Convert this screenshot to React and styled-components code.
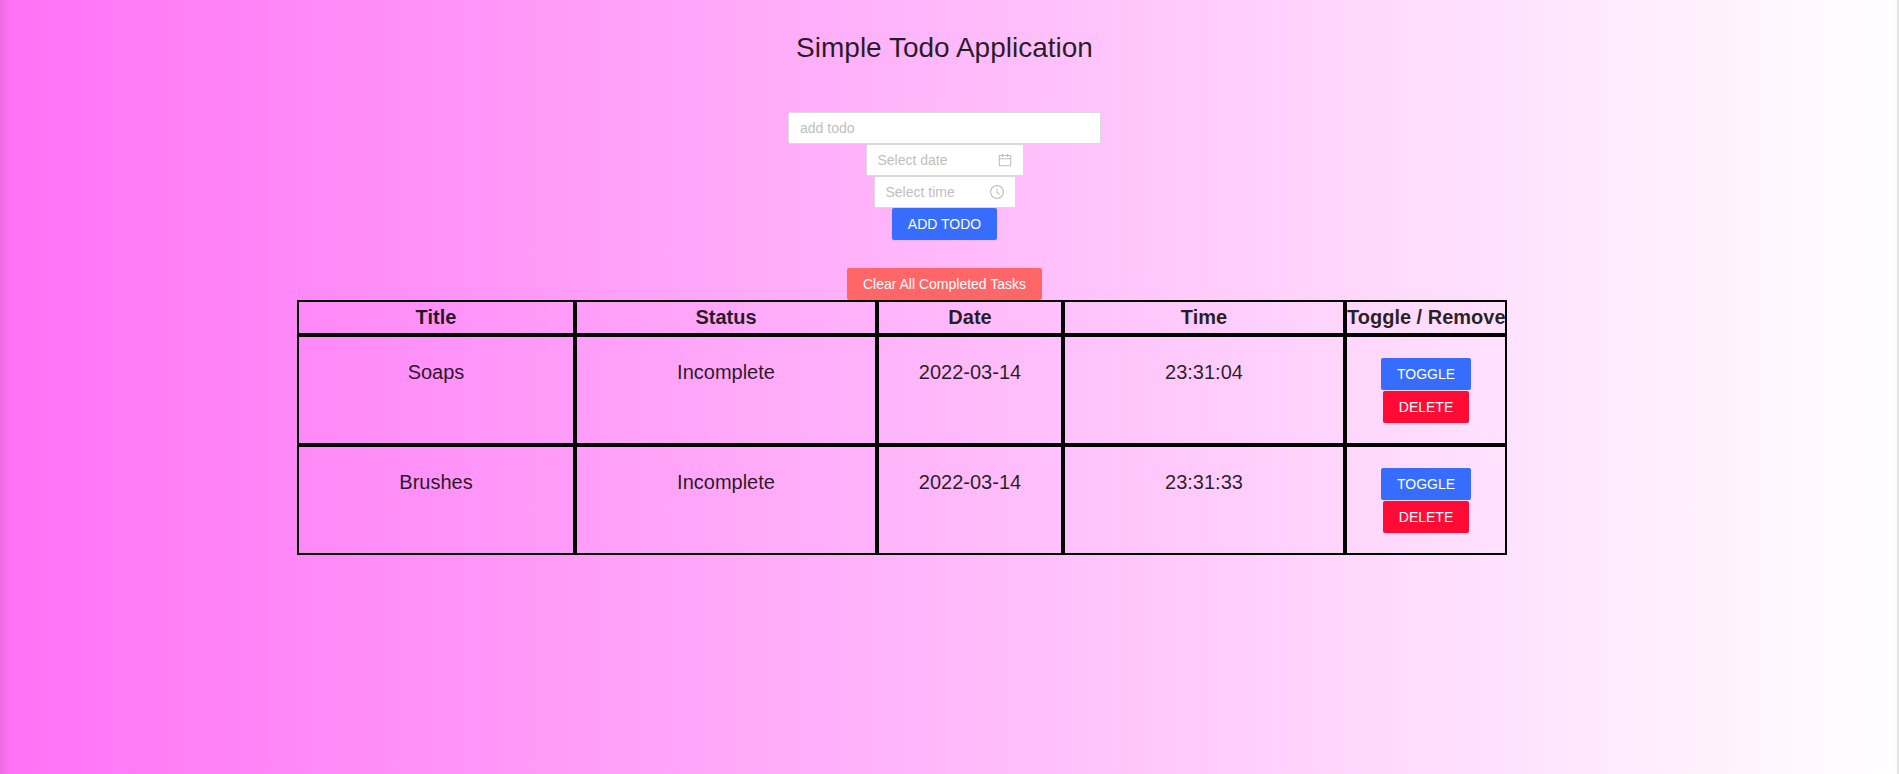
import React from "react";
import styled, { createGlobalStyle } from "styled-components";

const GlobalStyle = createGlobalStyle`
  *, *::before, *::after { box-sizing: border-box; }
  body {
    margin: 0;
    font-family: "Liberation Sans", Arial, sans-serif;
    font-size: 14px;
    line-height: 22px;
    color: rgba(0, 0, 0, 0.85);
  }
`;

const Page = styled.main`
  min-height: 100vh;
  padding: 30px 10px 0 0;
  background:
    linear-gradient(to right, rgba(0, 0, 0, 0.07), transparent 12px),
    linear-gradient(to left, rgba(0, 0, 0, 0.1) 2px, rgba(0, 0, 0, 0.02) 2px, transparent 5px),
    linear-gradient(to right, #ff72f6, #ffffff);
`;

const Heading = styled.h1`
  margin: 0 0 46px;
  font-size: 28px;
  line-height: 36px;
  font-weight: 400;
  text-align: center;
`;

const Form = styled.form`
  display: flex;
  flex-direction: column;
  align-items: center;
  margin-bottom: 28px;
`;

const Field = styled.label`
  display: flex;
  align-items: center;
  width: ${(p) => p.$width}px;
  height: 32px;
  padding: 0 11px;
  background: #fff;
  border: 1px solid #d9d9d9;
  border-radius: 2px;
  color: rgba(0, 0, 0, 0.25);
`;

const TextInput = styled.input`
  flex: 1;
  min-width: 0;
  padding: 0;
  border: 0;
  outline: 0;
  background: transparent;
  font: inherit;
  color: rgba(0, 0, 0, 0.85);
  &::placeholder { color: #bfbfbf; opacity: 1; }
`;

const Icon = styled.svg`
  flex: none;
  width: 14px;
  height: 14px;
  fill: currentColor;
`;

const Button = styled.button`
  height: 32px;
  padding: 0 16px;
  border: 0;
  border-radius: 2px;
  background: ${(p) => p.$color};
  box-shadow: 0 2px 0 rgba(0, 0, 0, 0.02);
  color: #fff;
  font: inherit;
  white-space: nowrap;
  cursor: pointer;
`;

const ClearBar = styled.div`
  display: flex;
  justify-content: center;
`;

const TableArea = styled.section`
  padding: 0 382px 0 297px;
`;

const Table = styled.table`
  width: 100%;
  table-layout: fixed;
  border-spacing: 0;
  font-size: 20px;
  line-height: 31px;
  text-align: center;
`;

const Column = styled.col`
  width: ${(p) => p.$width}px;
`;

const HeaderCell = styled.th`
  padding: 0;
  border: 2px solid #000;
  font-weight: 700;
  white-space: nowrap;
`;

const Cell = styled.td`
  height: 110px;
  padding: 21px 0 20px;
  border: 2px solid #000;
  line-height: 29px;
  vertical-align: top;
`;

const Actions = styled.div`
  display: flex;
  flex-direction: column;
  align-items: center;
  gap: 1px;
  font-size: 14px;
`;

const BLUE = "#366dff";
const RED = "#ff0b36";
const CORAL = "#ff6668";

const columns = [
  { label: "Title", width: 278 },
  { label: "Status", width: 302 },
  { label: "Date", width: 186 },
  { label: "Time", width: 282 },
  { label: "Toggle / Remove", width: 162 },
];

const todos = [
  { title: "Soaps", status: "Incomplete", date: "2022-03-14", time: "23:31:04" },
  { title: "Brushes", status: "Incomplete", date: "2022-03-14", time: "23:31:33" },
];

const CalendarIcon = () => (
  <Icon viewBox="64 64 896 896" aria-hidden="true">
    <path d="M880 184H712v-64c0-4.4-3.6-8-8-8h-56c-4.4 0-8 3.6-8 8v64H384v-64c0-4.4-3.6-8-8-8h-56c-4.4 0-8 3.6-8 8v64H144c-17.7 0-32 14.3-32 32v664c0 17.7 14.3 32 32 32h736c17.7 0 32-14.3 32-32V216c0-17.7-14.3-32-32-32zm-40 656H184V460h656v380zM184 392V256h128v48c0 4.4 3.6 8 8 8h56c4.4 0 8-3.6 8-8v-48h256v48c0 4.4 3.6 8 8 8h56c4.4 0 8-3.6 8-8v-48h128v136H184z" />
  </Icon>
);

const ClockIcon = () => (
  <Icon viewBox="64 64 896 896" aria-hidden="true">
    <path d="M512 64C264.6 64 64 264.6 64 512s200.6 448 448 448 448-200.6 448-448S759.4 64 512 64zm0 820c-205.4 0-372-166.6-372-372s166.6-372 372-372 372 166.6 372 372-166.6 372-372 372z" />
    <path d="M686.7 638.6L544.1 535.5V288c0-4.4-3.6-8-8-8H488c-4.4 0-8 3.6-8 8v275.4c0 2.6 1.2 5 3.3 6.5l165.4 120.6c3.6 2.6 8.6 1.9 11.2-1.7l28.6-39c2.6-3.7 1.8-8.7-1.8-11.2z" />
  </Icon>
);

export default function App() {
  return (
    <>
      <GlobalStyle />
      <Page>
        <Heading>Simple Todo Application</Heading>
        <Form onSubmit={(e) => e.preventDefault()}>
          <Field $width={313}>
            <TextInput type="text" placeholder="add todo" aria-label="Todo" />
          </Field>
          <Field $width={158}>
            <TextInput type="text" placeholder="Select date" aria-label="Date" />
            <CalendarIcon />
          </Field>
          <Field $width={142}>
            <TextInput type="text" placeholder="Select time" aria-label="Time" />
            <ClockIcon />
          </Field>
          <Button type="submit" $color={BLUE}>ADD TODO</Button>
        </Form>
        <ClearBar>
          <Button type="button" $color={CORAL}>Clear All Completed Tasks</Button>
        </ClearBar>
        <TableArea>
          <Table>
            <colgroup>
              {columns.map((c) => <Column key={c.label} $width={c.width} />)}
            </colgroup>
            <thead>
              <tr>
                {columns.map((c) => <HeaderCell key={c.label} scope="col">{c.label}</HeaderCell>)}
              </tr>
            </thead>
            <tbody>
              {todos.map((t) => (
                <tr key={t.title}>
                  <Cell>{t.title}</Cell>
                  <Cell>{t.status}</Cell>
                  <Cell>{t.date}</Cell>
                  <Cell>{t.time}</Cell>
                  <Cell>
                    <Actions>
                      <Button type="button" $color={BLUE}>TOGGLE</Button>
                      <Button type="button" $color={RED}>DELETE</Button>
                    </Actions>
                  </Cell>
                </tr>
              ))}
            </tbody>
          </Table>
        </TableArea>
      </Page>
    </>
  );
}
